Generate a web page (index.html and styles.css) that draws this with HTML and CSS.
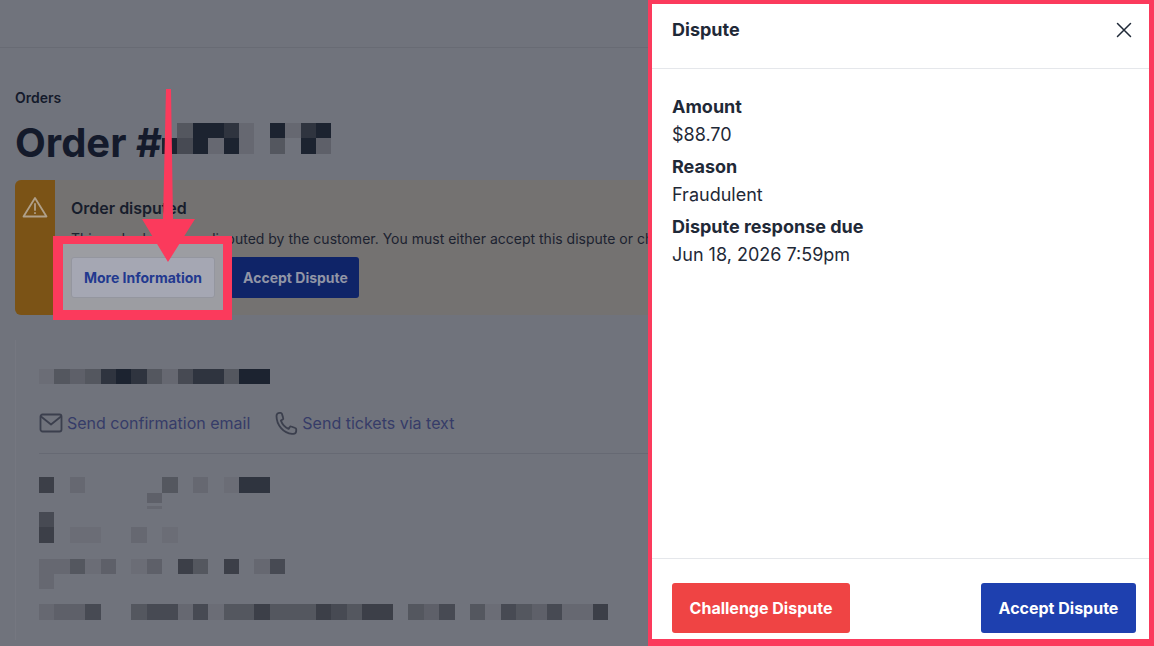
FILE: index.html
```html
<!DOCTYPE html>
<html lang="en">
<head>
  <meta charset="UTF-8">
  <title>Order - Dispute</title>
  <link rel="stylesheet" href="styles.css">
</head>
<body>
  <div class="topbar"></div>

  <main class="content">
    <div class="breadcrumb">Orders</div>
    <div class="title-row">
      <h1>Order #</h1>
      <div class="pixels title-pixels">
        <i></i><i class="e"></i><i class="a"></i><i class="a"></i><i class="b"></i><i class="g"></i><i></i><i class="a"></i><i class="g"></i><i class="b"></i><i class="a"></i><i></i>
        <i class="a"></i><i class="d"></i><i class="a"></i><i class="g"></i><i class="a"></i><i class="g"></i><i></i><i class="e"></i><i></i><i class="a"></i><i class="f"></i>
      </div>
    </div>

    <div class="alert">
      <div class="alert-band">
        <svg width="26" height="22" viewBox="0 0 26 22" fill="none" stroke="#b0a08a" stroke-width="1.8" stroke-linejoin="round" stroke-linecap="round">
          <path d="M13 2 L24.5 20.5 H1.5 Z"/>
          <path d="M13 8 V14"/>
          <path d="M13 17 V17.2"/>
        </svg>
      </div>
      <div class="alert-body">
        <h3>Order disputed</h3>
        <p>This order has been disputed by the customer. You must either accept this dispute or challenge it.</p>
        <div class="alert-actions">
          <button class="btn-outline">More Information</button>
          <button class="btn-dim">Accept Dispute</button>
        </div>
      </div>
    </div>

    <section class="card">
      <div class="pixels name-pixels">
        <i class="h"></i><i class="e"></i><i class="f"></i><i class="e"></i><i class="b"></i><i class="a"></i><i class="b"></i><i class="e"></i><i class="g"></i><i class="d"></i><i class="b"></i><i class="b"></i><i class="e"></i><i class="a"></i><i class="a"></i>
      </div>
      <div class="links">
        <a class="link">
          <svg width="24" height="20" viewBox="0 0 24 20" fill="none" stroke="#3b3f4d" stroke-width="1.8" stroke-linejoin="round" stroke-linecap="round">
            <rect x="1.5" y="1.5" width="21" height="17" rx="2"/>
            <path d="M2 3.5 L12 11.5 L22 3.5"/>
          </svg>
          Send confirmation email
        </a>
        <a class="link">
          <svg width="24" height="24" viewBox="0 0 24 24" fill="none" stroke="#3b3f4d" stroke-width="1.8" stroke-linejoin="round" stroke-linecap="round">
            <path d="M2.5 5 C2.5 3.2 4 1.8 5.5 1.8 H6.6 C7.2 1.8 7.7 2.2 7.9 2.8 L9.2 7.1 C9.4 7.6 9.2 8.2 8.7 8.5 L6.9 9.6 C8.4 13.6 10.8 16.3 14.6 17.9 L15.8 16 C16.1 15.5 16.7 15.3 17.2 15.5 L21.3 17 C21.9 17.2 22.2 17.7 22.2 18.3 V20 C22.2 21.6 20.9 22.8 19.2 22.8 H18 C9.6 22.2 2.5 14 2.5 5 Z"/>
          </svg>
          Send tickets via text
        </a>
      </div>
      <div class="card-line"></div>

      <div class="pixels details-pixels">
        <i class="c"></i><i></i><i class="g"></i><i></i><i></i><i></i><i></i><i></i><i class="e"></i><i></i><i class="g"></i><i></i><i class="h"></i><i class="b"></i><i class="b"></i>
      </div>
      <div class="pixels strip-pixels">
        <i></i><i></i><i></i><i></i><i></i><i></i><i></i><i class="f"></i>
      </div>
      <div class="pixels strip-pixels thin">
        <i></i><i></i><i></i><i></i><i></i><i></i><i></i><i class="g"></i>
      </div>
      <div class="pixels">
        <i class="d"></i>
      </div>
      <div class="pixels">
        <i class="c"></i><i></i><i class="h"></i><i class="h"></i><i></i><i></i><i class="g"></i><i></i><i class="h"></i>
      </div>
      <div class="pixels gap-row">
        <i class="g"></i><i class="g"></i><i class="e"></i><i class="h"></i><i class="f"></i><i></i><i class="h"></i><i class="f"></i><i></i><i class="c"></i><i class="e"></i><i></i><i class="c"></i><i></i><i class="g"></i><i class="d"></i>
      </div>
      <div class="pixels">
        <i class="g"></i>
      </div>
      <div class="pixels gap-row">
        <i class="g"></i><i class="f"></i><i class="f"></i><i class="d"></i><i></i><i></i><i class="e"></i><i class="d"></i><i class="d"></i><i class="g"></i><i class="d"></i><i class="h"></i><i class="e"></i><i class="e"></i><i class="c"></i><i class="e"></i><i class="e"></i><i class="e"></i><i class="c"></i><i class="d"></i><i class="e"></i><i class="c"></i><i class="c"></i><i></i><i class="e"></i><i class="f"></i><i class="d"></i><i></i><i class="e"></i><i class="h"></i><i class="d"></i><i class="e"></i><i class="f"></i><i class="d"></i><i class="g"></i><i class="g"></i><i class="c"></i>
      </div>
    </section>
  </main>

  <!-- annotations from the screenshot -->
  <div class="highlight"></div>
  <svg class="arrow" width="60" height="180" viewBox="0 0 60 180">
    <polygon points="25,3 30,3 32,133 54,133 27,176 1,133 22,133" fill="#fb3a5c"/>
  </svg>

  <aside class="panel">
    <header class="panel-head">
      <h2>Dispute</h2>
      <button class="close" aria-label="Close">
        <svg width="16" height="16" viewBox="0 0 16 16" fill="none" stroke="#1f2937" stroke-width="1.5" stroke-linecap="round">
          <path d="M1.5 1.5 L14.5 14.5 M14.5 1.5 L1.5 14.5"/>
        </svg>
      </button>
    </header>
    <div class="panel-body">
      <div class="field">
        <strong>Amount</strong>
        <span>$88.70</span>
      </div>
      <div class="field">
        <strong>Reason</strong>
        <span>Fraudulent</span>
      </div>
      <div class="field">
        <strong>Dispute response due</strong>
        <span>Jun 18, 2026 7:59pm</span>
      </div>
    </div>
    <footer class="panel-foot">
      <button class="btn btn-red">Challenge Dispute</button>
      <button class="btn btn-blue">Accept Dispute</button>
    </footer>
  </aside>
</body>
</html>
```

FILE: styles.css
```css
* {
  box-sizing: border-box;
}

html, body {
  margin: 0;
  height: 646px;
  overflow: hidden;
}

body {
  position: relative;
  font-family: Inter, "Liberation Sans", sans-serif;
  background-color: #70737c;
  color: #141a2b;
}

h1, h2, h3, p {
  margin: 0;
}

button {
  font-family: inherit;
  border: none;
}

.topbar {
  height: 48px;
  border-bottom: 1px solid #686b74;
}

.content {
  padding: 42px 0 0 15px;
}

.breadcrumb {
  font-size: 14px;
  font-weight: 600;
  line-height: 16px;
}

.title-row {
  display: flex;
  align-items: flex-start;
  margin-top: 12px;
  height: 52px;
}

h1 {
  font-size: 40px;
  font-weight: 700;
  line-height: 50px;
  width: 147px;
  flex: none;
}

/* blurred out customer data */
.pixels {
  display: grid;
  grid-template-columns: repeat(auto-fill, 15.4px);
  grid-auto-rows: 15.4px;
}

.pixels .a { background: #1c2330; }
.pixels .b { background: #2f343f; }
.pixels .c { background: #3c3f48; }
.pixels .d { background: #474a53; }
.pixels .e { background: #54575f; }
.pixels .f { background: #5e6069; }
.pixels .g { background: #666871; }
.pixels .h { background: #6b6d76; }

.title-pixels {
  width: 185px;
  margin-top: 5px;
}

.alert {
  display: flex;
  width: 633px;
  height: 135px;
  margin-top: 10px;
  background: #747271;
  border-radius: 6px 0 0 6px;
}

.alert-band {
  width: 40px;
  flex: none;
  padding: 16px 0 0 7px;
  background: #7b5316;
  border-radius: 6px 0 0 6px;
}

.alert-body {
  padding: 18px 0 0 16px;
  flex: 1;
  min-width: 0;
}

.alert-body h3 {
  font-size: 16px;
  font-weight: 600;
  line-height: 20px;
  color: #171d2c;
}

.alert-body p {
  margin-top: 11px;
  font-size: 14px;
  line-height: 20px;
  color: #1c2230;
  white-space: nowrap;
  overflow: hidden;
}

.alert-actions {
  display: flex;
  gap: 15px;
  margin-top: 8px;
}

.btn-outline,
.btn-dim {
  height: 41px;
  border-radius: 3px;
  font-size: 14px;
  font-weight: 700;
}

.btn-outline {
  position: relative;
  z-index: 2;
  width: 144px;
  background: #a5a7b3;
  border: 1px solid #94969f;
  color: #22398f;
}

.btn-dim {
  width: 129px;
  padding: 0 0 0 2px;
  background: #0f2468;
  color: #9195a6;
}

.card {
  width: 633px;
  margin-top: 25px;
  padding: 29px 0 0 23px;
  height: 300px;
  border-left: 1px solid #757780;
}

.name-pixels {
  width: 240px;
}

.links {
  display: flex;
  gap: 24px;
  align-items: center;
  margin-top: 27px;
  height: 24px;
}

.link {
  display: flex;
  align-items: center;
  gap: 4px;
  font-size: 16px;
  color: #363c68;
  white-space: nowrap;
}

.card-line {
  height: 1px;
  margin: 18px 0 23px;
  background: #666973;
}

.details-pixels,
.gap-row {
  width: 600px;
}

.strip-pixels {
  width: 240px;
  grid-auto-rows: 10px;
}

.strip-pixels.thin {
  grid-auto-rows: 3px;
  margin: 3px 0 3px;
}

.gap-row {
  margin-top: 16px;
}

.gap-row + .pixels + .gap-row {
  margin-top: 15px;
}

.highlight {
  position: absolute;
  left: 53px;
  top: 236px;
  width: 179px;
  height: 84px;
  z-index: 1;
  background: #9c9da2;
  border: 10px solid #fb3a5c;
  border-width: 8px 9px 10px 10px;
}

.arrow {
  position: absolute;
  left: 141px;
  top: 86px;
  z-index: 3;
}

.panel {
  position: absolute;
  top: 0;
  right: 0;
  bottom: 0;
  width: 506px;
  z-index: 4;
  display: flex;
  flex-direction: column;
  background: white;
  border: solid #fb3a5c;
  border-width: 4px 5px 7px 4px;
  color: #1f2937;
}

.panel-head {
  display: flex;
  justify-content: space-between;
  height: 65px;
  padding: 15px 17px 0 20px;
  border-bottom: 1px solid #e5e7eb;
}

.panel-head h2 {
  font-size: 18px;
  font-weight: 700;
  line-height: 22px;
}

.close {
  padding: 0;
  height: 16px;
  margin-top: 3px;
  background: none;
}

.panel-body {
  flex: 1;
  padding: 24px 20px 0;
}

.field {
  display: flex;
  flex-direction: column;
  margin-bottom: 4px;
  font-size: 18px;
  line-height: 28px;
}

.field strong {
  font-weight: 700;
}

.panel-foot {
  display: flex;
  justify-content: space-between;
  height: 81px;
  padding: 24px 13px 0 20px;
  border-top: 1px solid #e5e7eb;
}

.btn {
  height: 50px;
  border-radius: 3px;
  font-size: 16px;
  font-weight: 700;
  color: white;
}

.btn-red {
  width: 178px;
  background-color: #ef4444;
}

.btn-blue {
  width: 155px;
  background-color: #1e40af;
}
```
